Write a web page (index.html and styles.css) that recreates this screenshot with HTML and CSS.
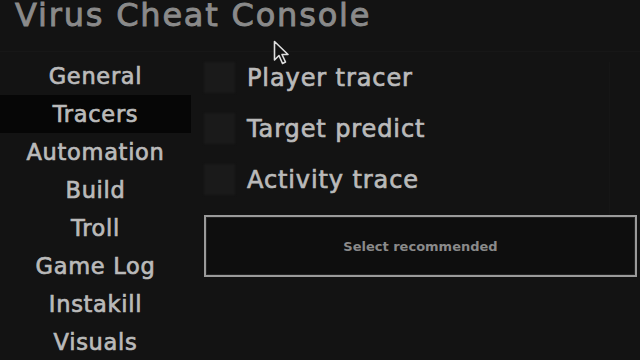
FILE: index.html
```html
<!DOCTYPE html>
<html>
<head>
<meta charset="utf-8">
<link rel="stylesheet" href="styles.css">
</head>
<body>
<div class="app">
  <header class="titlebar"><h1 class="title">Virus Cheat Console</h1></header>
  <div class="main">
    <nav class="sidebar">
      <div class="nav-item">General</div>
      <div class="nav-item active">Tracers</div>
      <div class="nav-item">Automation</div>
      <div class="nav-item">Build</div>
      <div class="nav-item">Troll</div>
      <div class="nav-item">Game Log</div>
      <div class="nav-item">Instakill</div>
      <div class="nav-item">Visuals</div>
    </nav>
    <section class="content">
      <div class="options">
        <label class="option"><span class="check"></span><span class="opt-label">Player tracer</span></label>
        <label class="option"><span class="check"></span><span class="opt-label">Target predict</span></label>
        <label class="option"><span class="check"></span><span class="opt-label">Activity trace</span></label>
      </div>
      <button class="btn">Select recommended</button>
    </section>
  </div>
  <svg class="cursor" width="18" height="26" viewBox="0 0 18 26"><path d="M1.5 1.5 L1.5 20 L6 15.5 L9.5 23.5 L12.5 22 L9 14.5 L15 14.5 Z" fill="#111" stroke="#ddd" stroke-width="1.6" stroke-linejoin="round"/></svg>
</div>
</body>
</html>
```
FILE: styles.css
```css
html, body {
  margin: 0;
  padding: 0;
  background: #131313;
}
.app {
  position: relative;
  width: 640px;
  height: 360px;
  overflow: hidden;
  background: #131313;
  font-family: "DejaVu Sans", Verdana, sans-serif;
}
.titlebar {
  height: 52px;
  border-bottom: 1px solid #171717;
  box-sizing: border-box;
}
.title {
  margin: 0;
  padding: 0 0 0 15px;
  font-size: 32px;
  font-weight: normal;
  line-height: 31px;
  color: #8a8a8a;
  letter-spacing: 1.8px;
  -webkit-text-stroke: 0.9px #8a8a8a;
}
.main {
  display: flex;
  height: 308px;
}
.sidebar {
  width: 191px;
  display: flex;
  flex-direction: column;
  padding-top: 5px;
}
.nav-item {
  height: 38.2px;
  line-height: 38px;
  text-align: center;
  font-size: 22.5px;
  letter-spacing: 0.7px;
  color: #bababa;
  -webkit-text-stroke: 0.7px #bababa;
}
.nav-item.active {
  background: #060606;
}
.content {
  flex: 1;
  padding: 10px 3px 0 13px;
  display: flex;
  flex-direction: column;
}
.options {
  display: flex;
  flex-direction: column;
  gap: 20px;
  padding-bottom: 20px;
  border-right: 1px solid #161616;
  margin-right: 27px;
}
.option {
  display: flex;
  align-items: center;
  height: 31px;
  gap: 12px;
}
.check {
  width: 31px;
  height: 31px;
  background: #1a1a1a;
  filter: blur(1px);
}
.opt-label {
  font-size: 24px;
  letter-spacing: 0.9px;
  color: #bababa;
  -webkit-text-stroke: 0.7px #bababa;
}
.btn {
  height: 62px;
  margin-top: 0;
  background: #0e0e0e;
  border: 2px solid #9a9a9a;
  box-shadow: inset 0 0 0 1px #222;
  color: #8a8a8a;
  font-family: "DejaVu Sans", Verdana, sans-serif;
  font-size: 13px;
  font-weight: bold;
  padding: 0;
}
.cursor {
  position: absolute;
  left: 273px;
  top: 40px;
}
```
